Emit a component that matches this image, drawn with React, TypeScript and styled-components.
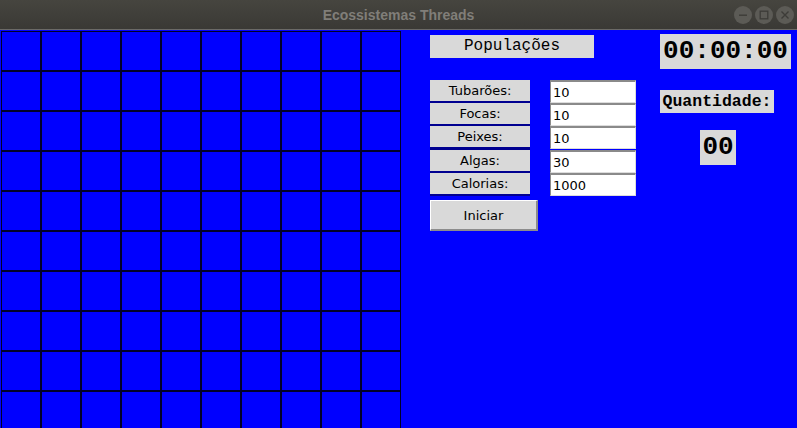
import React from 'react';
import styled, { createGlobalStyle } from 'styled-components';

const GlobalStyle = createGlobalStyle`
  html,
  body {
    margin: 0;
    padding: 0;
    overflow: hidden;
    background: #0000ff;
  }
`;

const Window = styled.div`
  width: 797px;
  height: 428px;
  display: flex;
  flex-direction: column;
  background: #0000ff;
  overflow: hidden;
`;

const TitleBar = styled.div`
  position: relative;
  flex: 0 0 29px;
  display: flex;
  align-items: center;
  justify-content: center;
  background: linear-gradient(#46453f, #3a3935);
  border-bottom: 1px solid #6b6a66;
`;

const Title = styled.span`
  font-family: 'Liberation Sans', Arial, sans-serif;
  font-weight: bold;
  font-size: 14px;
  color: #807e79;
`;

const Controls = styled.div`
  position: absolute;
  right: 3px;
  top: 6px;
  display: flex;
  gap: 3px;
`;

const ControlButton = styled.svg`
  width: 18px;
  height: 18px;
`;

const Main = styled.div`
  flex: 1;
  display: flex;
  align-items: flex-start;
`;

const Board = styled.div`
  flex: 0 0 auto;
  margin: 1px 0 0 1px;
  display: grid;
  grid-template-columns: repeat(10, 40px);
  grid-auto-rows: 40px;
`;

const Cell = styled.div`
  box-sizing: border-box;
  border: 1px solid #00002a;
  background: #0000ff;
`;

const Panel = styled.div`
  display: flex;
  gap: 24px;
  padding: 4px 0 0 29px;
`;

const FormColumn = styled.div`
  width: 206px;
  display: flex;
  flex-direction: column;
  align-items: flex-start;
`;

const Heading = styled.div`
  width: 164px;
  height: 23px;
  margin-top: 1px;
  background: #d9d9d9;
  font-family: 'Liberation Mono', 'Courier New', monospace;
  font-size: 16px;
  line-height: 23px;
  text-align: center;
  color: #000;
`;

const Form = styled.div`
  display: flex;
  gap: 20px;
  margin-top: 22px;
`;

const LabelStack = styled.div`
  width: 100px;
  display: flex;
  flex-direction: column;
  background: #000090;
`;

const FieldLabel = styled.div<{ $gap: number }>`
  height: 21px;
  margin-top: ${(p) => p.$gap}px;
  background: #d9d9d9;
  font-family: 'DejaVu Sans', Verdana, sans-serif;
  font-size: 13px;
  line-height: 21px;
  text-align: center;
  color: #000;
`;

const EntryStack = styled.div`
  width: 86px;
  display: flex;
  flex-direction: column;
`;

const Entry = styled.input<{ $gap: number }>`
  box-sizing: border-box;
  width: 86px;
  height: 23px;
  margin: ${(p) => p.$gap}px 0 0 0;
  padding: 0 0 0 2px;
  background: #fff;
  border-style: solid;
  border-width: 2px 1px 1px 1px;
  border-color: #8a8a8a #dcdcdc #dcdcdc #8a8a8a;
  outline: none;
  font-family: 'DejaVu Sans', Verdana, sans-serif;
  font-size: 13px;
  color: #000;
`;

const StartButton = styled.button`
  box-sizing: border-box;
  width: 108px;
  height: 31px;
  margin-top: 4px;
  padding: 0;
  background: #d9d9d9;
  border-style: solid;
  border-width: 1px 2px 2px 1px;
  border-color: #ffffff #8c8c8c #8c8c8c #ffffff;
  font-family: 'DejaVu Sans', Verdana, sans-serif;
  font-size: 13px;
  color: #000;
`;

const StatsColumn = styled.div`
  display: flex;
  flex-direction: column;
  align-items: flex-start;
`;

const Clock = styled.div`
  width: 131px;
  height: 35px;
  background: #d9d9d9;
  font-family: 'Liberation Mono', 'Courier New', monospace;
  font-weight: bold;
  font-size: 26px;
  line-height: 35px;
  text-align: center;
  color: #000;
`;

const CountLabel = styled.div`
  width: 114px;
  height: 23px;
  margin-top: 21px;
  background: #d9d9d9;
  font-family: 'Liberation Mono', 'Courier New', monospace;
  font-weight: bold;
  font-size: 16.5px;
  line-height: 23px;
  text-align: center;
  color: #000;
`;

const Count = styled(Clock)`
  width: 36px;
  margin: 17px 0 0 40px;
`;

const fields = [
  { label: 'Tubarões:', value: '10', labelGap: 0, entryGap: 0 },
  { label: 'Focas:', value: '10', labelGap: 2, entryGap: 0 },
  { label: 'Peixes:', value: '10', labelGap: 2, entryGap: 0 },
  { label: 'Algas:', value: '30', labelGap: 3, entryGap: 1 },
  { label: 'Calorias:', value: '1000', labelGap: 2, entryGap: 0 },
];

const WindowControls: React.FC = () => (
  <Controls>
    <ControlButton viewBox="0 0 18 18">
      <circle cx="9" cy="9" r="9" fill="#5c5b56" />
      <rect x="5" y="8.5" width="8" height="1.4" fill="#3d3c38" />
    </ControlButton>
    <ControlButton viewBox="0 0 18 18">
      <circle cx="9" cy="9" r="9" fill="#5c5b56" />
      <rect x="5.2" y="5.2" width="7.6" height="7.6" fill="none" stroke="#3d3c38" strokeWidth="1.3" />
    </ControlButton>
    <ControlButton viewBox="0 0 18 18">
      <circle cx="9" cy="9" r="9" fill="#5c5b56" />
      <path d="M5.5 5.5 L12.5 12.5 M12.5 5.5 L5.5 12.5" stroke="#3d3c38" strokeWidth="1.4" />
    </ControlButton>
  </Controls>
);

const App: React.FC = () => (
  <>
    <GlobalStyle />
    <Window>
      <TitleBar>
        <Title>Ecossistemas Threads</Title>
        <WindowControls />
      </TitleBar>
      <Main>
        <Board>
          {Array.from({ length: 100 }, (_, i) => (
            <Cell key={i} />
          ))}
        </Board>
        <Panel>
          <FormColumn>
            <Heading>Populações</Heading>
            <Form>
              <LabelStack>
                {fields.map((f) => (
                  <FieldLabel key={f.label} $gap={f.labelGap}>
                    {f.label}
                  </FieldLabel>
                ))}
              </LabelStack>
              <EntryStack>
                {fields.map((f) => (
                  <Entry key={f.label} $gap={f.entryGap} defaultValue={f.value} />
                ))}
              </EntryStack>
            </Form>
            <StartButton>Iniciar</StartButton>
          </FormColumn>
          <StatsColumn>
            <Clock>00:00:00</Clock>
            <CountLabel>Quantidade:</CountLabel>
            <Count>00</Count>
          </StatsColumn>
        </Panel>
      </Main>
    </Window>
  </>
);

export default App;
